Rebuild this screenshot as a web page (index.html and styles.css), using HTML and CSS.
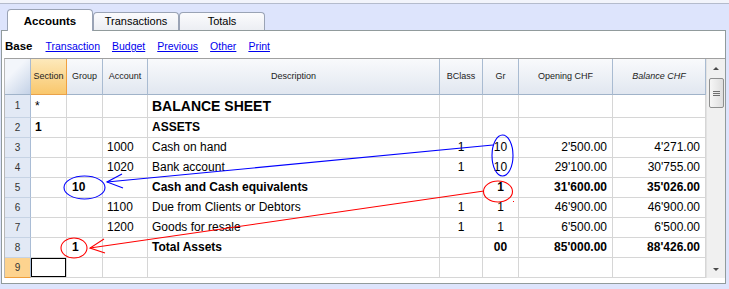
FILE: index.html
```html
<!DOCTYPE html>
<html lang="en">
<head>
  <meta charset="UTF-8">
  <title>Accounts</title>
  <link rel="stylesheet" href="styles.css">
</head>
<body>
  <div class="topline"></div>

  <div class="tabs">
    <div class="tab active">Accounts</div>
    <div class="tab">Transactions</div>
    <div class="tab">Totals</div>
  </div>

  <div class="panel">
    <div class="toolbar">
      <b>Base</b>
      <a href="#">Transaction</a>
      <a href="#">Budget</a>
      <a href="#">Previous</a>
      <a href="#">Other</a>
      <a href="#">Print</a>
    </div>

    <div class="grid-wrap">
      <div class="grid">
        <div class="row head">
          <div class="corner"></div>
          <div class="sec">Section</div>
          <div>Group</div>
          <div>Account</div>
          <div>Description</div>
          <div>BClass</div>
          <div>Gr</div>
          <div>Opening CHF</div>
          <div class="it">Balance CHF</div>
        </div>
        <div class="row r1">
          <div class="rn">1</div>
          <div>*</div>
          <div></div>
          <div></div>
          <div class="title">BALANCE SHEET</div>
          <div></div><div></div><div></div><div></div>
        </div>
        <div class="row">
          <div class="rn">2</div>
          <div class="b">1</div>
          <div></div>
          <div></div>
          <div class="b">ASSETS</div>
          <div></div><div></div><div></div><div></div>
        </div>
        <div class="row">
          <div class="rn">3</div>
          <div></div>
          <div></div>
          <div>1000</div>
          <div>Cash on hand</div>
          <div class="c">1</div>
          <div class="c">10</div>
          <div class="num">2'500.00</div>
          <div class="num">4'271.00</div>
        </div>
        <div class="row">
          <div class="rn">4</div>
          <div></div>
          <div></div>
          <div>1020</div>
          <div>Bank account</div>
          <div class="c">1</div>
          <div class="c">10</div>
          <div class="num">29'100.00</div>
          <div class="num">30'755.00</div>
        </div>
        <div class="row">
          <div class="rn">5</div>
          <div></div>
          <div class="b grp">10</div>
          <div></div>
          <div class="b">Cash and Cash equivalents</div>
          <div></div>
          <div class="c b">1</div>
          <div class="num b">31'600.00</div>
          <div class="num b">35'026.00</div>
        </div>
        <div class="row">
          <div class="rn">6</div>
          <div></div>
          <div></div>
          <div>1100</div>
          <div>Due from Clients or Debtors</div>
          <div class="c">1</div>
          <div class="c">1</div>
          <div class="num">46'900.00</div>
          <div class="num">46'900.00</div>
        </div>
        <div class="row">
          <div class="rn">7</div>
          <div></div>
          <div></div>
          <div>1200</div>
          <div>Goods for resale</div>
          <div class="c">1</div>
          <div class="c">1</div>
          <div class="num">6'500.00</div>
          <div class="num">6'500.00</div>
        </div>
        <div class="row">
          <div class="rn">8</div>
          <div></div>
          <div class="b grp">1</div>
          <div></div>
          <div class="b">Total Assets</div>
          <div></div>
          <div class="c b">00</div>
          <div class="num b">85'000.00</div>
          <div class="num b">88'426.00</div>
        </div>
        <div class="row">
          <div class="rn cur">9</div>
          <div class="sel"></div>
          <div></div><div></div><div></div><div></div><div></div><div></div><div></div>
        </div>
      </div>

      <div class="scrollbar">
        <div class="sb-btn"><span class="arrow-up"></span></div>
        <div class="thumb"><span class="grip"></span></div>
        <div class="sb-space"></div>
        <div class="sb-btn"><span class="arrow-down"></span></div>
      </div>
    </div>
  </div>

  <!-- hand-drawn markers over the grid -->
  <svg class="marks" width="729" height="289" viewBox="0 0 729 289">
    <g fill="none" stroke="#0000ff" stroke-width="1.1">
      <ellipse cx="502.5" cy="155.5" rx="10.5" ry="20.5"/>
      <ellipse cx="84.5" cy="187.5" rx="20.5" ry="11.5"/>
      <line x1="493" y1="145" x2="107" y2="182"/>
      <polyline points="122,174 107,182 123,188"/>
    </g>
    <g fill="none" stroke="#ff0000" stroke-width="1.1">
      <ellipse cx="498" cy="191.5" rx="14.5" ry="10.5"/>
      <ellipse cx="74" cy="248" rx="13" ry="10"/>
      <line x1="484" y1="191" x2="90" y2="248"/>
      <polyline points="104,239 90,248 105,253"/>
    </g>
    <rect x="513" y="201" width="1" height="1" fill="#ff0000"/>
  </svg>
</body>
</html>
```

FILE: styles.css
```css
body {
  margin: 0;
  width: 729px;
  height: 289px;
  overflow: hidden;
  position: relative;
  background-color: #dde4fc;
  font-family: "Liberation Sans", Arial, sans-serif;
  color: #000;
}
.topline {
  height: 3px;
  background-color: #f2f4fb;
  border-bottom: 1px solid #b4bbcc;
}
.tabs {
  display: flex;
  align-items: flex-end;
  height: 27px;
  padding-left: 7px;
  margin-bottom: -1px;
  position: relative;
  z-index: 1;
}
.tab {
  box-sizing: border-box;
  width: 86px;
  height: 18px;
  margin-bottom: 1px;
  padding-top: 2px;
  border: 1px solid #9aa3b5;
  border-bottom: none;
  border-radius: 4px 4px 0 0;
  background: linear-gradient(#fbfbfd, #eceef3);
  font-size: 11px;
  text-align: center;
}
.tab.active {
  height: 22px;
  margin-bottom: 0;
  padding-top: 5px;
  background: #fff;
  font-weight: bold;
  font-size: 11.5px;
}
.panel {
  box-sizing: border-box;
  margin: 0 3px 0 1px;
  height: 254px;
  padding: 0 0 0 2px;
  background-color: #fff;
  border: 1px solid #919b9c;
}
.toolbar {
  box-sizing: border-box;
  height: 27px;
  padding: 3px 0 0 1px;
  display: flex;
  align-items: center;
  gap: 12px;
  font-size: 10.5px;
}
.toolbar b {
  font-size: 11.5px;
  margin-right: 1px;
}
.toolbar a {
  color: #0000ee;
  text-decoration: underline;
}
.grid-wrap {
  display: flex;
  border-top: 1px solid #a0a0a0;
  border-left: 1px solid #b8b8b8;
}
.row {
  display: grid;
  grid-template-columns: 26px 36px 36px 45px 292px 43px 36px 94px 93px;
  height: 20px;
}
.row > div {
  box-sizing: border-box;
  padding: 0 4px;
  border-right: 1px solid #d6d6d6;
  border-bottom: 1px solid #d6d6d6;
  font-size: 12px;
  line-height: 19px;
  white-space: nowrap;
  overflow: hidden;
}
.row.r1 {
  height: 23px;
}
.row.r1 > div {
  line-height: 22px;
}
.row.head {
  height: 36px;
}
.row.head > div {
  padding: 0;
  background: linear-gradient(#f9fafc, #e1e7f0);
  border-right-color: #a9bbd1;
  border-bottom-color: #a0b3c9;
  font-size: 9px;
  line-height: 35px;
  text-align: center;
  color: #222;
}
.row.head > .sec {
  background: linear-gradient(#fde9bb, #f9c76c);
  border-right-color: #f0a040;
  border-bottom-color: #e9a24a;
}
.row.head > .corner {
  background: linear-gradient(135deg, #f3f6fb 35%, #c4d2e7);
}
.row.head > .it {
  font-style: italic;
}
.row > .rn {
  padding: 0;
  background-color: #e2e9f5;
  border-right-color: #a9bcd5;
  border-bottom-color: #c6d3e4;
  font-size: 10px;
  text-align: center;
  color: #333;
}
.row > .rn.cur {
  background-color: #fdd38f;
  border-bottom-color: #ef9e3c;
}
.row > .sel {
  box-shadow: inset 0 0 0 1px #000;
}
.row > .title {
  font-size: 14px;
  font-weight: bold;
}
.b {
  font-weight: bold;
}
.c {
  text-align: center;
}
.row > .num {
  text-align: right;
  padding-right: 5px;
}
.row > .grp {
  padding-left: 5px;
}
.scrollbar {
  flex: 1;
  display: flex;
  flex-direction: column;
  align-items: center;
  height: 219px;
  background-color: #f0f0f0;
  border-left: 1px solid #e2e2e2;
}
.sb-btn {
  height: 18px;
  width: 100%;
  display: flex;
  align-items: center;
  justify-content: center;
}
.arrow-up {
  border-left: 3px solid transparent;
  border-right: 3px solid transparent;
  border-bottom: 3px solid #4a4a4a;
}
.arrow-down {
  border-left: 3px solid transparent;
  border-right: 3px solid transparent;
  border-top: 3px solid #4a4a4a;
}
.thumb {
  box-sizing: border-box;
  width: 15px;
  height: 30px;
  margin-top: 1px;
  display: flex;
  align-items: center;
  justify-content: center;
  border: 1px solid #8e8f8f;
  border-radius: 2px;
  background: linear-gradient(90deg, #f6f6f6, #dedede);
}
.grip {
  box-sizing: border-box;
  width: 7px;
  height: 5px;
  border-top: 1px solid #6f6f6f;
  border-bottom: 1px solid #6f6f6f;
  background: linear-gradient(#6f6f6f, #6f6f6f) center / 100% 1px no-repeat;
}
.sb-space {
  flex: 1;
}
.marks {
  position: absolute;
  top: 0;
  left: 0;
  pointer-events: none;
}
```
